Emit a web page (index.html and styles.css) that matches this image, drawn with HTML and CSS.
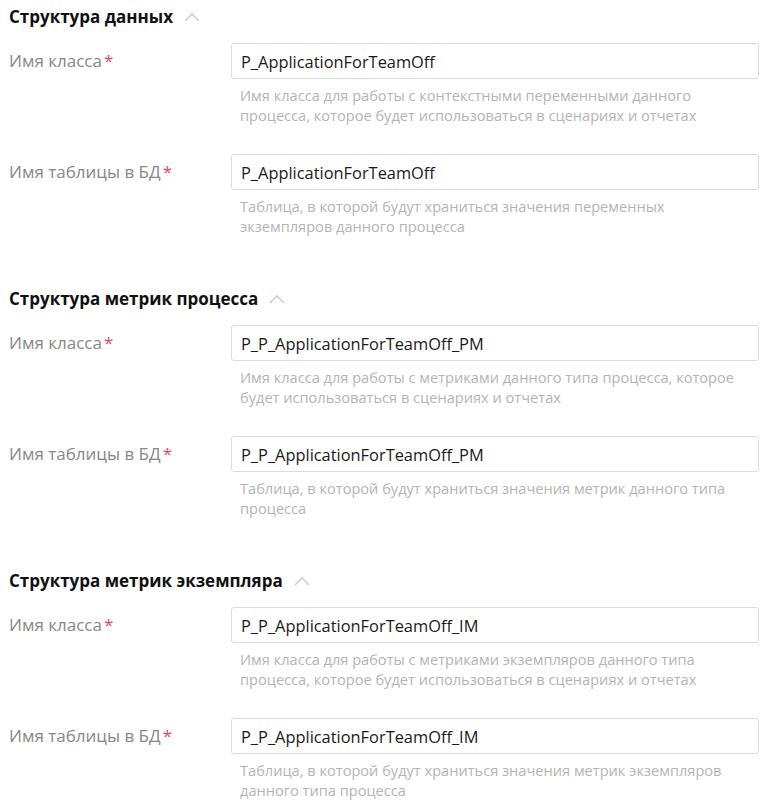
FILE: index.html
```html
<!DOCTYPE html>
<html lang="ru">
<head>
    <meta charset="UTF-8">
    <title>Структура процесса</title>
    <link rel="stylesheet" href="styles.css">
</head>
<body>

<section class="group">
    <h2 class="group-title">Структура данных <svg class="chevron" width="16" height="9" viewBox="0 0 16 9"><path d="M1 8 L8 1 L15 8" fill="none" stroke="#c8c8c8" stroke-width="1.3"/></svg></h2>
    <div class="row">
        <label class="field-label">Имя класса<span class="req">*</span></label>
        <div class="field">
            <input class="field-input" type="text" value="P_ApplicationForTeamOff">
            <p class="hint">Имя класса для работы с контекстными переменными данного<br>процесса, которое будет использоваться в сценариях и отчетах</p>
        </div>
    </div>
    <div class="row">
        <label class="field-label">Имя таблицы в БД<span class="req">*</span></label>
        <div class="field">
            <input class="field-input" type="text" value="P_ApplicationForTeamOff">
            <p class="hint">Таблица, в которой будут храниться значения переменных<br>экземпляров данного процесса</p>
        </div>
    </div>
</section>

<section class="group">
    <h2 class="group-title">Структура метрик процесса <svg class="chevron" width="16" height="9" viewBox="0 0 16 9"><path d="M1 8 L8 1 L15 8" fill="none" stroke="#c8c8c8" stroke-width="1.3"/></svg></h2>
    <div class="row">
        <label class="field-label">Имя класса<span class="req">*</span></label>
        <div class="field">
            <input class="field-input" type="text" value="P_P_ApplicationForTeamOff_PM">
            <p class="hint">Имя класса для работы с метриками данного типа процесса, которое<br>будет использоваться в сценариях и отчетах</p>
        </div>
    </div>
    <div class="row">
        <label class="field-label">Имя таблицы в БД<span class="req">*</span></label>
        <div class="field">
            <input class="field-input" type="text" value="P_P_ApplicationForTeamOff_PM">
            <p class="hint">Таблица, в которой будут храниться значения метрик данного типа<br>процесса</p>
        </div>
    </div>
</section>

<section class="group">
    <h2 class="group-title">Структура метрик экземпляра <svg class="chevron" width="16" height="9" viewBox="0 0 16 9"><path d="M1 8 L8 1 L15 8" fill="none" stroke="#c8c8c8" stroke-width="1.3"/></svg></h2>
    <div class="row">
        <label class="field-label">Имя класса<span class="req">*</span></label>
        <div class="field">
            <input class="field-input" type="text" value="P_P_ApplicationForTeamOff_IM">
            <p class="hint">Имя класса для работы с метриками экземпляров данного типа<br>процесса, которое будет использоваться в сценариях и отчетах</p>
        </div>
    </div>
    <div class="row">
        <label class="field-label">Имя таблицы в БД<span class="req">*</span></label>
        <div class="field">
            <input class="field-input" type="text" value="P_P_ApplicationForTeamOff_IM">
            <p class="hint">Таблица, в которой будут храниться значения метрик экземпляров<br>данного типа процесса</p>
        </div>
    </div>
</section>

</body>
</html>
```

FILE: styles.css
```css
body { margin: 0; padding: 6px 9px 0 9px; background: #fff; font-family: "Open Sans", "Noto Sans", sans-serif; }
.group { display: flex; flex-direction: column; gap: 29px; margin-bottom: 52px; }
.group-title { margin: 0 0 -14px 0; font-size: 17px; line-height: 22px; font-weight: 700; color: #111; display: flex; align-items: center; gap: 11px; }
.chevron { margin-top: 1px; }
.row { display: grid; grid-template-columns: 222px 1fr; }
.field-label { font-size: 17px; line-height: 36px; color: #888; }
.req { color: #e8475f; margin-left: 2px; }
.field { display: flex; flex-direction: column; }
.field-input { box-sizing: border-box; height: 36px; width: 100%; padding: 0 9px; border: 1px solid #dcdcdc; border-radius: 3px; font-family: inherit; font-size: 16.4px; color: #1a1a1a; background: #fff; }
.hint { margin: 6px 0 0 9px; font-size: 14.6px; line-height: 20px; color: #b4b4b4; white-space: nowrap; }
```
